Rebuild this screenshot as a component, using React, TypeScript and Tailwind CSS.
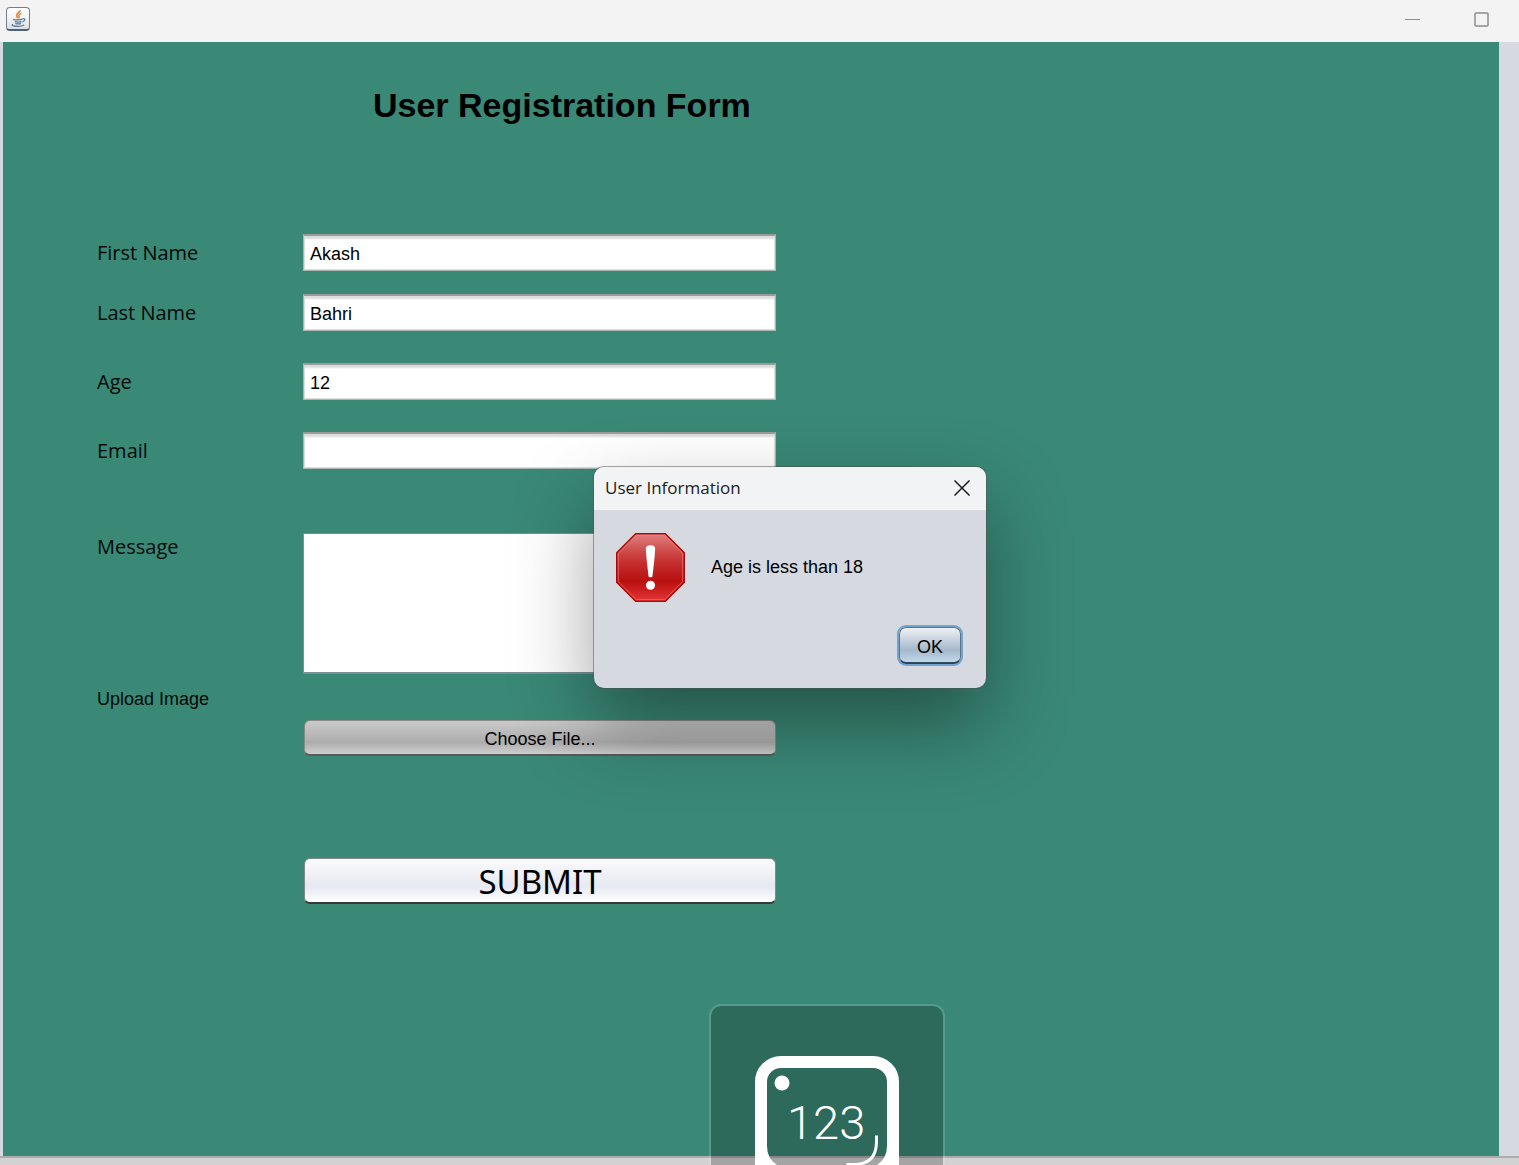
import React, { useState } from "react";

const labelClass =
  'font-["Open_Sans",sans-serif] text-[20px] leading-7 text-[#020a08]';

function JavaIcon() {
  return (
    <span className="grid size-6 place-items-center rounded-[4px] border border-[#6f8190] border-b-2 border-b-[#4c6274] bg-gradient-to-b from-white via-[#f2f2f2] to-[#dcdfe2]">
      <svg viewBox="0 0 16 18" className="h-[19px] w-[19px]" fill="none" aria-hidden="true">
        <path d="M9.400 1.200C10 3 6 4 6.300 6.200c.1.900 1 1.500 1.300 2.600" stroke="#e8883a" strokeWidth="1.700" />
        <path d="M10.800 4.200C8.800 5 8 5.800 8.500 6.800c.3.700.4 1.200-.2 2" stroke="#e8883a" strokeWidth="1.400" />
        <path d="M3.400 9.600c-1.600.8 7 1 8.400 0M12 9.200c2.800-.6 2.600 2.200-.4 2.900M4.400 11.800c1.400.7 5 .7 6.400 0M5 13.600c1.300.6 4 .6 5.400 0" stroke="#557a99" strokeWidth="1.200" />
        <path d="M2.800 14.400C-1 16.400 9 17.300 13.400 15.200" stroke="#557a99" strokeWidth="1.200" />
      </svg>
    </span>
  );
}

function ErrorIcon() {
  return (
    <svg viewBox="0 0 70 70" className="size-[69px] shrink-0" role="img" aria-label="Error">
      <defs>
        <linearGradient id="stop-fill" x1="0" y1="0" x2="0" y2="1">
          <stop offset="0" stopColor="#e18080" />
          <stop offset="0.3" stopColor="#cc4343" />
          <stop offset="0.5" stopColor="#c22626" />
          <stop offset="0.7" stopColor="#b80f0f" />
          <stop offset="1" stopColor="#e43535" />
        </linearGradient>
      </defs>
      <path d="M20 .7h30L69.300 20v30L50 69.300H20L.7 50V20Z" fill="url(#stop-fill)" stroke="#ac0606" strokeWidth="1.400" />
      <path d="M20.700 2.300h28.600L67.700 20.700v28.600L49.300 67.700H20.700L2.300 49.300V20.700Z" fill="none" stroke="#ee8585" strokeOpacity=".65" />
      <path d="M30.300 15.500q.2-3 4.700-3t4.700 3q0 6-2.700 28.500q-.1 1-1 1h-2q-.9 0-1-1Q30.300 21.500 30.300 15.500Z" fill="#fff" />
      <circle cx="35" cy="53" r="4.600" fill="#fff" />
    </svg>
  );
}

type FieldProps = { id: string; label: string; initial: string; gap: string };

function Field({ id, label, initial, gap }: FieldProps) {
  const [value, setValue] = useState(initial);
  return (
    <div className={`flex items-center ${gap}`}>
      <label htmlFor={id} className={`w-[206px] shrink-0 ${labelClass}`}>
        {label}
      </label>
      <input
        id={id}
        type="text"
        value={value}
        onChange={(e) => setValue(e.target.value)}
        className="h-[37px] w-full max-w-[473px] border border-[#aab7b2] border-t-2 border-t-[#9b9d9c] bg-white px-1.5 pt-0.5 text-[18px] text-black shadow-[inset_0_3px_2px_#dcdcdc,inset_0_0_0_1px_#dedede] outline-none"
      />
    </div>
  );
}

function Dialog() {
  return (
    <section
      role="dialog"
      aria-labelledby="dialog-title"
      className="absolute left-[594px] top-[467px] w-[392px] overflow-hidden rounded-[10px] bg-[#d6d9e0] shadow-[0_0_0_1px_rgba(80,80,80,0.5),0_36px_80px_rgba(0,0,0,0.38)]"
    >
      <header className="flex h-[43px] items-center justify-between bg-[#f2f3f4] pb-0.5 pl-[11px] pr-4">
        <h2 id="dialog-title" className='font-["Open_Sans",sans-serif] text-[17px] text-[#1b1b1b]'>
          User Information
        </h2>
        <button type="button" aria-label="Close">
          <svg viewBox="0 0 16 16" className="size-4" fill="none" stroke="#1b1b1b" strokeWidth="1.500" aria-hidden="true">
            <path d="M.5.5l15 15M15.500.5l-15 15" />
          </svg>
        </button>
      </header>
      <div className="flex items-center gap-[26px] px-[22px] pt-[23px]">
        <ErrorIcon />
        <p className="text-[18px] text-black">Age is less than 18</p>
      </div>
      <div className="flex justify-end pb-6 pr-[25px] pt-[25px]">
        <button
          type="button"
          className="h-[37px] w-[62px] rounded-[7px] border border-[#5c7285] border-b-2 border-b-[#2f4558] bg-gradient-to-b from-[#eef1f4] via-[#a5b8cc] via-65% to-[#c2d6ea] pt-1 text-[18px] text-black shadow-[0_0_0_2px_#73a4d1]"
        >
          OK
        </button>
      </div>
    </section>
  );
}

function InputModeOverlay() {
  return (
    <div className="pointer-events-none absolute bottom-0 left-[709px] flex h-[161px] w-[236px] justify-center overflow-hidden rounded-t-[12px] border-2 border-b-0 border-white/15 bg-black/22 bg-clip-padding pt-[50px]">
      <svg viewBox="0 0 144 112" className="h-28 w-36 shrink-0" fill="none" role="img" aria-label="123">
        <rect x="6" y="6" width="132" height="122" rx="20" stroke="#fff" strokeWidth="12" />
        <path d="M12 90v22h16q-16-6-16-22ZM132 90v22h-16q16-6 16-22Z" fill="#fff" />
        <circle cx="27" cy="27" r="7.500" fill="#fff" />
        <text x="32" y="83" fontSize="47" fill="#fff" fontFamily="Roboto" fontWeight="300">
          123
        </text>
        <path d="M121.500 79.500v6q0 23-23 23h-7" stroke="#fff" strokeWidth="3" />
      </svg>
    </div>
  );
}

export default function App() {
  const [message, setMessage] = useState("");
  return (
    <main className='relative flex min-h-screen flex-col overflow-hidden bg-[#d6d9e0] font-["Liberation_Sans",Arial,sans-serif]'>
      <header className="flex h-[42px] items-start justify-between bg-[#f3f3f3] pl-1.5 pr-[29px] pt-[7px]">
        <JavaIcon />
        <div className="flex gap-[53px] pt-1 text-[#8d8d8d]">
          <button type="button" aria-label="Minimize">
            <svg viewBox="0 0 16 16" className="size-4" stroke="currentColor" aria-hidden="true">
              <path d="M0 8.500h15" />
            </svg>
          </button>
          <button type="button" aria-label="Maximize">
            <svg viewBox="0 0 16 16" className="size-4" fill="none" stroke="currentColor" strokeWidth="1.500" aria-hidden="true">
              <rect x="1" y="2" width="13" height="13" rx="1" />
            </svg>
          </button>
        </div>
      </header>

      <form
        onSubmit={(e) => e.preventDefault()}
        className="ml-[3px] mr-5 flex-1 bg-[#3a8876] pl-[94px] pr-6 pt-[43px]"
      >
        <h1 className="mb-[109px] pl-[276px] text-[34px] font-bold leading-10 text-black">
          User Registration Form
        </h1>
        <Field id="first-name" label="First Name" initial="Akash" gap="mb-[23px]" />
        <Field id="last-name" label="Last Name" initial="Bahri" gap="mb-8" />
        <Field id="age" label="Age" initial="12" gap="mb-8" />
        <Field id="email" label="Email" initial="" gap="mb-16" />
        <div className="flex items-start">
          <label htmlFor="message" className={`w-[206px] shrink-0 ${labelClass}`}>
            Message
          </label>
          <textarea
            id="message"
            value={message}
            onChange={(e) => setMessage(e.target.value)}
            className="h-[141px] w-full max-w-[473px] resize-none border border-b-2 border-[#7b9198] bg-white p-1.5 text-[18px] outline-none"
          />
        </div>
        <label htmlFor="choose-file" className="mt-[13px] block text-[18px] leading-6 text-[#020a08]">
          Upload Image
        </label>
        <div className="pl-[207px]">
          <button
            id="choose-file"
            type="button"
            className="mt-[9px] block h-9 w-full max-w-[472px] rounded-[6px] border border-[#8a8a8a] border-b-2 border-b-[#5a5a5a] bg-gradient-to-b from-[#cacaca] via-[#adadad] via-65% to-[#cfcfcf] pt-1 text-[18px] text-black"
          >
            Choose File...
          </button>
          <button
            type="submit"
            className='mt-[102px] flex h-[46px] w-full max-w-[472px] items-center justify-center rounded-[6px] border border-[#85898c] border-b-2 border-b-[#36393c] bg-gradient-to-b from-[#fafbfc] via-[#e6e9f2] via-65% to-white pt-0.5 font-["Noto_Sans",sans-serif] text-[33px] leading-10 text-black'
          >
            SUBMIT
          </button>
        </div>
      </form>
      <footer className="h-[9px] border-t-2 border-[#acacac] bg-[#d2d2d2]" />

      <InputModeOverlay />
      <Dialog />
    </main>
  );
}
